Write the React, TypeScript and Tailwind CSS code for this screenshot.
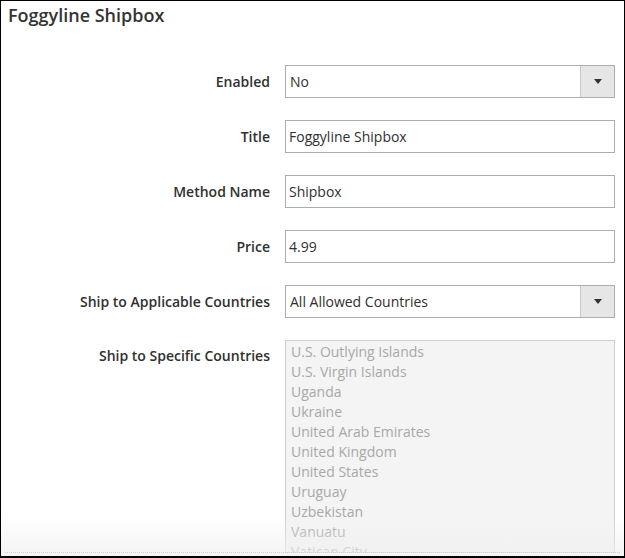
import React from "react"

const countries = [
  "U.S. Outlying Islands",
  "U.S. Virgin Islands",
  "Uganda",
  "Ukraine",
  "United Arab Emirates",
  "United Kingdom",
  "United States",
  "Uruguay",
  "Uzbekistan",
  "Vanuatu",
  "Vatican City",
]

function Label({ children }: { children: React.ReactNode }) {
  return (
    <div className="w-[269px] shrink-0 text-right text-[14px] font-semibold text-[#303030] leading-[33px]">
      {children}
    </div>
  )
}

function Select({ value }: { value: string }) {
  return (
    <div className="ml-[15px] flex h-[33px] w-[330px] border border-[#adadad] bg-white">
      <div className="flex-1 pl-[4px] text-[14px] leading-[31px] text-[#303030]">{value}</div>
      <div className="flex w-[34px] items-center justify-center border-l border-[#c8c8c8] bg-[#e6e6e6]">
        <svg width="8" height="5" viewBox="0 0 8 5">
          <path d="M0 0 L8 0 L4 5 Z" fill="#333" />
        </svg>
      </div>
    </div>
  )
}

function Input({ value }: { value: string }) {
  return (
    <div className="ml-[15px] h-[33px] w-[330px] border border-[#adadad] bg-white pl-[3px] text-[14px] leading-[31px] text-[#303030]">
      {value}
    </div>
  )
}

export default function App() {
  return (
    <div
      className="relative h-[558px] w-[625px] overflow-hidden border-t border-l border-r border-b-2 border-black bg-white"
      style={{ fontFamily: '"Open Sans", "Noto Sans", sans-serif' }}
    >
      <h1 className="pl-[7px] pt-[2px] text-[18px] font-semibold leading-[24px] text-[#333]">Foggyline Shipbox</h1>

      <div className="mt-[38px] flex flex-col gap-[22px]">
        <div className="flex">
          <Label>Enabled</Label>
          <Select value="No" />
        </div>
        <div className="flex">
          <Label>Title</Label>
          <Input value="Foggyline Shipbox" />
        </div>
        <div className="flex">
          <Label>Method Name</Label>
          <Input value="Shipbox" />
        </div>
        <div className="flex">
          <Label>Price</Label>
          <Input value="4.99" />
        </div>
        <div className="flex">
          <Label>Ship to Applicable Countries</Label>
          <Select value="All Allowed Countries" />
        </div>
        <div className="flex">
          <div className="w-[269px] shrink-0 pt-[4px] text-right text-[14px] font-semibold leading-[24px] text-[#303030]">
            Ship to Specific Countries
          </div>
          <div className="ml-[15px] h-[213px] w-[330px] overflow-hidden border border-[#cfcfcf] bg-[#f4f4f4] pl-[5px] pt-[1px]">
            {countries.map((c) => (
              <div key={c} className="text-[14px] leading-[20px] text-[#a8a8a8]">
                {c}
              </div>
            ))}
          </div>
        </div>
      </div>

      <div className="pointer-events-none absolute bottom-0 left-0 right-0 h-[40px] bg-gradient-to-b from-white/0 to-[#f0f0f0]/75" />
      <div className="pointer-events-none absolute bottom-[3px] left-[4px] right-[4px] border-b border-dotted border-[#d0d0d0]" />
    </div>
  )
}
